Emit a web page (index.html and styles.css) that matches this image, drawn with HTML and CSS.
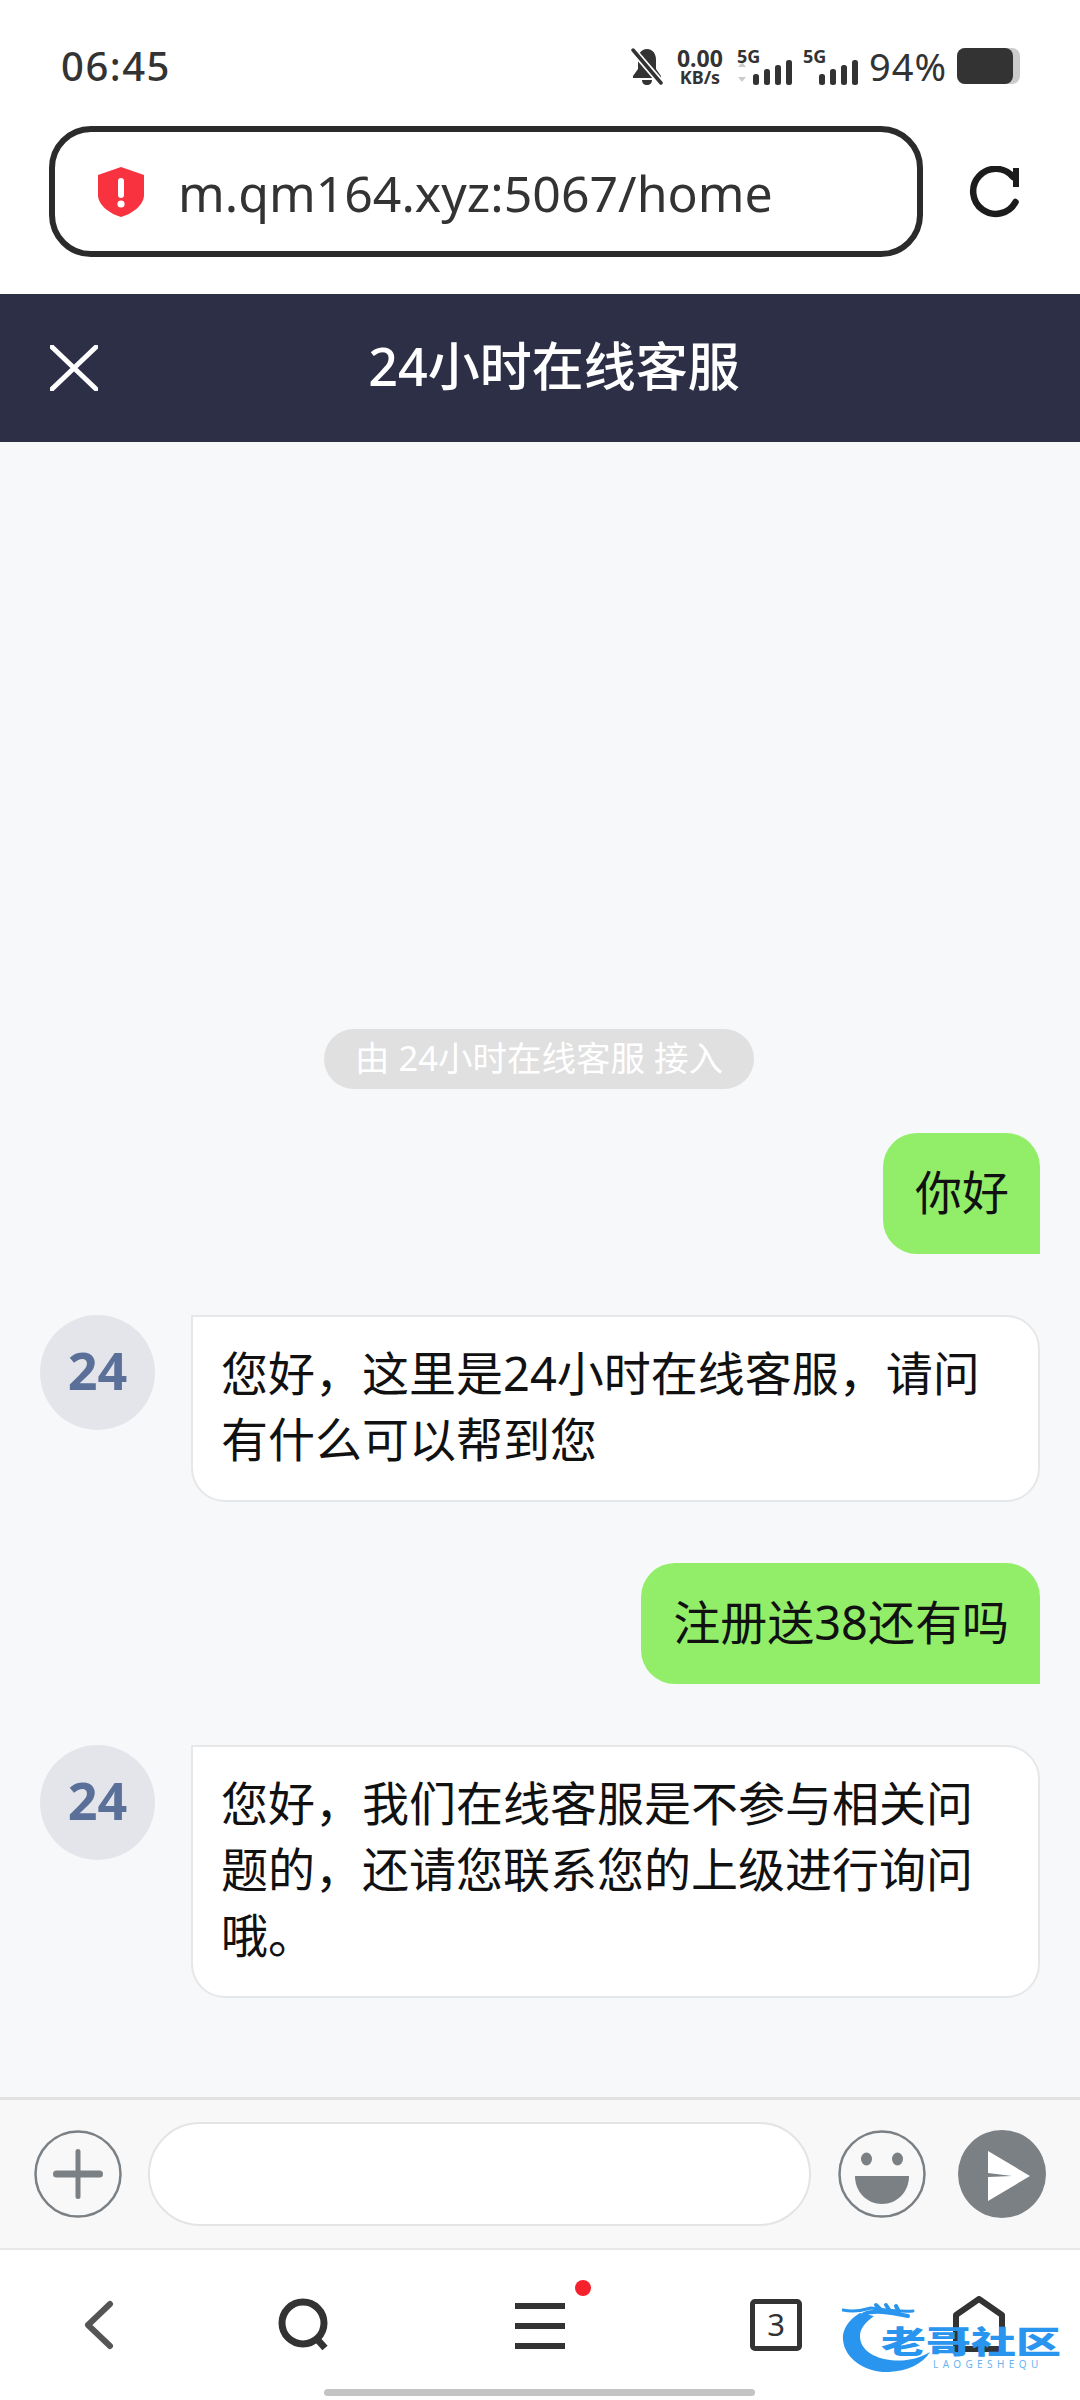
FILE: index.html
```html
<!DOCTYPE html>
<html lang="zh-CN">
<head>
    <meta charset="UTF-8">
    <meta name="viewport" content="width=device-width, initial-scale=1.0">
    <title>24小时在线客服</title>
    <link rel="stylesheet" href="styles.css">
</head>
<body>
    <div class="phone">
        <div class="status-bar">
            <span class="time">06:45</span>
            <div class="status-icons">
                <svg class="bell" width="32" height="38" viewBox="0 0 32 38">
                    <path fill="#333" d="M16 1c6 0 9 5 9 11v9l5 7v2H2v-2l5-7v-9C7 6 10 1 16 1zM11 32h10c0 3-2 5-5 5s-5-2-5-5z"/>
                    <path stroke="#fff" stroke-width="7" d="M1 1l30 35"/>
                    <path stroke="#333" stroke-width="3.5" stroke-linecap="round" d="M2 2l28 33"/>
                </svg>
                <div class="speed">
                    <span class="speed-num">0.00</span>
                    <span class="speed-unit">KB/s</span>
                </div>
                <div class="signal">
                    <span class="net">5G</span>
                    <svg width="56" height="26" viewBox="0 0 56 26">
                        <path fill="#ccc" d="M5 3l4 5H1zM5 23l4-5H1z"/>
                        <rect x="16" y="15" width="6" height="11" rx="2.5" fill="#333"/>
                        <rect x="27" y="10" width="6" height="16" rx="2.5" fill="#333"/>
                        <rect x="38" y="6" width="6" height="20" rx="2.5" fill="#333"/>
                        <rect x="49" y="1" width="6" height="25" rx="2.5" fill="#333"/>
                    </svg>
                </div>
                <div class="signal">
                    <span class="net">5G</span>
                    <svg width="56" height="26" viewBox="0 0 56 26">
                        <rect x="16" y="15" width="6" height="11" rx="2.5" fill="#333"/>
                        <rect x="27" y="10" width="6" height="16" rx="2.5" fill="#333"/>
                        <rect x="38" y="6" width="6" height="20" rx="2.5" fill="#333"/>
                        <rect x="49" y="1" width="6" height="25" rx="2.5" fill="#333"/>
                    </svg>
                </div>
                <span class="battery-text">94%</span>
                <div class="battery"><div class="battery-fill"></div></div>
            </div>
        </div>

        <div class="url-bar">
            <div class="url-box">
                <svg class="shield" width="46" height="50" viewBox="0 0 46 50">
                    <path fill="#f9323f" d="M23 0l23 8v20c0 10-12 19-23 22C12 47 0 38 0 28V8z"/>
                    <rect x="20" y="11" width="6" height="20" rx="3" fill="#fff"/>
                    <circle cx="23" cy="37" r="3.6" fill="#fff"/>
                </svg>
                <span class="url-text">m.qm164.xyz:5067/home</span>
            </div>
            <svg class="reload" width="56" height="56" viewBox="0 0 56 56">
                <path fill="none" stroke="#1c1c1c" stroke-width="6.5" stroke-linecap="round" d="M48.500 36A22.500 22.500 0 1 1 46 11"/>
                <rect x="46" y="2" width="6" height="19" fill="#1c1c1c"/>
            </svg>
        </div>

        <header class="chat-header">
            <svg class="close" width="48" height="46" viewBox="0 0 48 46">
                <path stroke="#fff" stroke-width="5" stroke-linecap="round" d="M2 2l44 42M46 2L2 44"/>
            </svg>
            <h1 class="chat-title">24小时在线客服</h1>
        </header>

        <main class="chat">
            <div class="notice">由 24小时在线客服 接入</div>

            <div class="msg msg-me">
                <div class="bubble bubble-me">你好</div>
            </div>

            <div class="msg msg-kefu">
                <div class="avatar">24</div>
                <div class="bubble bubble-kefu">您好，这里是24小时在线客服，请问有什么可以帮到您</div>
            </div>

            <div class="msg msg-me">
                <div class="bubble bubble-me">注册送38还有吗</div>
            </div>

            <div class="msg msg-kefu">
                <div class="avatar">24</div>
                <div class="bubble bubble-kefu">您好，我们在线客服是不参与相关问题的，还请您联系您的上级进行询问哦。</div>
            </div>
        </main>

        <div class="input-bar">
            <svg width="88" height="88" viewBox="0 0 88 88">
                <circle cx="44" cy="44" r="42.500" fill="none" stroke="#7b8085" stroke-width="2.500"/>
                <rect x="19" y="40.500" width="50" height="7" rx="3.500" fill="#7b8085"/>
                <rect x="41.500" y="19" width="5" height="50" rx="2.500" fill="#7b8085"/>
            </svg>
            <div class="input-box"></div>
            <svg width="88" height="88" viewBox="0 0 88 88">
                <circle cx="44" cy="44" r="42.500" fill="none" stroke="#7b8085" stroke-width="2.500"/>
                <ellipse cx="28.500" cy="29" rx="5.500" ry="6.500" fill="#7b8085"/>
                <ellipse cx="59.500" cy="29" rx="5.500" ry="6.500" fill="#7b8085"/>
                <path fill="#7b8085" d="M17 46h54c0 16-12 28-27 28S17 62 17 46z"/>
            </svg>
            <svg class="send" width="88" height="88" viewBox="0 0 88 88">
                <circle cx="44" cy="44" r="44" fill="#7b8085"/>
                <path fill="#fff" d="M30 21l42 25-42 25V47l24-1-24-3z"/>
            </svg>
        </div>

        <nav class="bottom-nav">
            <svg class="nav-back" width="30" height="50" viewBox="0 0 30 50">
                <path fill="none" stroke="#555" stroke-width="6" stroke-linecap="round" stroke-linejoin="round" d="M26 4L4 25l22 21"/>
            </svg>
            <svg class="nav-search" width="52" height="54" viewBox="0 0 52 54">
                <circle cx="25" cy="25" r="21" fill="none" stroke="#333" stroke-width="7"/>
                <path stroke="#333" stroke-width="7" d="M38 40l9 10"/>
            </svg>
            <div class="nav-menu">
                <span class="menu-line"></span>
                <span class="menu-line"></span>
                <span class="menu-line"></span>
                <span class="red-dot"></span>
            </div>
            <div class="nav-tabs">3</div>
            <svg class="nav-home" width="52" height="56" viewBox="0 0 52 56">
                <path fill="none" stroke="#333" stroke-width="6" stroke-linejoin="round" d="M3 53V19L26 3l23 16v34z"/>
            </svg>
            <span class="home-line"></span>
        </nav>

        <div class="watermark">
            <svg class="dragon" width="100" height="80" viewBox="0 0 100 80">
                <path fill="#2a95ee" d="M18 17C6 24 0 34 1 44c2 20 24 33 46 32 18-1 34-8 41-20-12 7-26 10-40 8-16-2-30-10-30-24 0-8 6-14 14-20z"/>
                <path fill="none" stroke="#2a95ee" stroke-width="3" stroke-linecap="round" d="M1 14c10 2 18 1 28-2 14 2 28 4 42 3"/>
                <path fill="none" stroke="#2a95ee" stroke-width="4" stroke-linecap="round" d="M22 18c10-4 24-2 44 2M34 9l6 6M44 9l4 6M54 10l3 6"/>
            </svg>
            <span class="wm-title">老哥社区</span>
            <span class="wm-sub">LAOGESHEQU</span>
        </div>
    </div>
</body>
</html>
```

FILE: styles.css
```css
body, html {
    margin: 0;
    padding: 0;
    background-color: white;
    font-family: "Noto Sans", "Noto Sans CJK SC", sans-serif;
}

.phone {
    position: relative;
    width: 1080px;
    height: 2400px;
    display: flex;
    flex-direction: column;
    overflow: hidden;
}

/* status bar */
.status-bar {
    height: 126px;
    flex-shrink: 0;
    display: flex;
    align-items: flex-start;
    justify-content: space-between;
    padding: 41px 60px 0 61px;
    box-sizing: border-box;
    color: #333;
}

.time {
    font-size: 40px;
    line-height: 50px;
    font-weight: 500;
    letter-spacing: 1.5px;
}

.status-icons {
    display: flex;
    align-items: flex-start;
    margin-top: 7px;
}

.bell {
    margin-right: 11px;
}

.speed {
    width: 52px;
    margin-right: 1px;
    display: flex;
    flex-direction: column;
    align-items: center;
    font-weight: 700;
}

.speed-num {
    font-size: 23px;
    line-height: 20px;
}

.speed-unit {
    font-size: 18px;
    line-height: 19px;
}

.signal {
    position: relative;
    width: 56px;
    height: 37px;
    margin-left: 10px;
    display: flex;
    align-items: flex-end;
}

.net {
    position: absolute;
    left: 0;
    top: -2px;
    font-size: 18px;
    line-height: 20px;
    font-weight: 700;
}

.battery-text {
    font-size: 38px;
    line-height: 36px;
    margin-left: 10px;
    letter-spacing: 1px;
}

.battery {
    width: 63px;
    height: 36px;
    margin-left: 10px;
    background-color: #ccc;
    border-radius: 8px;
}

.battery-fill {
    width: 56px;
    height: 36px;
    background-color: #333;
    border-radius: 8px;
}

/* address bar */
.url-bar {
    height: 168px;
    flex-shrink: 0;
    display: flex;
    align-items: flex-start;
    padding-left: 49px;
}

.url-box {
    width: 874px;
    height: 131px;
    box-sizing: border-box;
    border: 6px solid #2b2b2b;
    border-radius: 42px;
    display: flex;
    align-items: center;
    padding-left: 43px;
}

.shield {
    flex-shrink: 0;
}

.url-text {
    margin: 2px 0 0 34px;
    font-size: 50px;
    color: #333;
}

.reload {
    margin: 40px 0 0 44px;
}

/* chat header */
.chat-header {
    position: relative;
    height: 148px;
    flex-shrink: 0;
    box-sizing: border-box;
    padding: 0 0 9px 28px;
    background-color: #2c2f45;
    display: flex;
    align-items: center;
    justify-content: center;
}

.close {
    position: absolute;
    left: 50px;
    top: 51px;
}

.chat-title {
    margin: 0;
    font-size: 52px;
    font-weight: 500;
    color: white;
}

/* messages */
.chat {
    flex: 1;
    background-color: #f7f8fa;
    display: flex;
    flex-direction: column;
    justify-content: flex-end;
    padding: 0 40px 99px;
}

.notice {
    align-self: center;
    height: 60px;
    line-height: 58px;
    padding: 0 31px;
    margin: 0 0 44px -2px;
    border-radius: 30px;
    background-color: #e0e0e0;
    color: white;
    font-size: 34.500px;
    white-space: nowrap;
}

.msg {
    display: flex;
    margin-bottom: 61px;
}

.msg:last-child {
    margin-bottom: 0;
}

.msg-me {
    justify-content: flex-end;
}

.bubble {
    font-size: 47px;
    line-height: 66px;
    color: #111;
    box-sizing: border-box;
}

.bubble-me {
    padding: 26px 31px 29px 32px;
    background-color: #92ee68;
    border-radius: 34px 34px 0 34px;
}

.bubble-kefu {
    flex: 1;
    padding: 23px 30px 28px 28px;
    background-color: white;
    border: 2px solid #e6e7e9;
    border-radius: 0 34px 34px 34px;
}

.avatar {
    width: 115px;
    height: 115px;
    margin-right: 36px;
    flex-shrink: 0;
    border-radius: 50%;
    background-color: #e3e5ea;
    color: #5a7099;
    font-size: 52px;
    font-weight: 700;
    line-height: 110px;
    text-align: center;
}

/* input row */
.input-bar {
    height: 153px;
    flex-shrink: 0;
    box-sizing: border-box;
    background-color: #f8f8f8;
    border-top: 3px solid #e2e2e2;
    border-bottom: 2px solid #e8e8e8;
    display: flex;
    align-items: center;
    padding: 0 34px;
}

.input-box {
    width: 663px;
    height: 104px;
    margin: 0 27px 0 26px;
    box-sizing: border-box;
    background-color: white;
    border: 2px solid #e4e4e4;
    border-radius: 52px;
}

.send {
    margin-left: 32px;
}

/* bottom nav */
.bottom-nav {
    position: relative;
    height: 150px;
    flex-shrink: 0;
    background-color: white;
}

.nav-back {
    position: absolute;
    left: 84px;
    top: 50px;
}

.nav-search {
    position: absolute;
    left: 278px;
    top: 48px;
}

.nav-menu {
    position: absolute;
    left: 515px;
    top: 53px;
    width: 50px;
    display: flex;
    flex-direction: column;
    gap: 14px;
}

.menu-line {
    height: 6px;
    background-color: #333;
}

.red-dot {
    position: absolute;
    left: 60px;
    top: -23px;
    width: 16px;
    height: 16px;
    border-radius: 50%;
    background-color: #f5222d;
}

.nav-tabs {
    position: absolute;
    left: 750px;
    top: 49px;
    width: 52px;
    height: 52px;
    box-sizing: border-box;
    border: 5px solid #333;
    border-radius: 5px;
    font-size: 31px;
    line-height: 40px;
    text-align: center;
    color: #333;
}

.nav-home {
    position: absolute;
    left: 953px;
    top: 46px;
}

.home-line {
    position: absolute;
    left: 324px;
    top: 139px;
    width: 431px;
    height: 7px;
    border-radius: 4px;
    background-color: #c4c4c4;
}

/* watermark over the nav */
.watermark {
    position: absolute;
    left: 842px;
    top: 2296px;
    width: 226px;
    height: 80px;
    color: #2a95ee;
}

.dragon {
    position: absolute;
    left: 0;
    top: 0;
}

.wm-title {
    position: absolute;
    left: 39px;
    top: 20px;
    font-size: 45px;
    line-height: 50px;
    font-weight: 900;
    white-space: nowrap;
    transform: scaleY(0.68);
}

.wm-sub {
    position: absolute;
    left: 91px;
    top: 62px;
    font-size: 10px;
    line-height: 12px;
    letter-spacing: 4.4px;
    white-space: nowrap;
    opacity: 0.7;
}
```
